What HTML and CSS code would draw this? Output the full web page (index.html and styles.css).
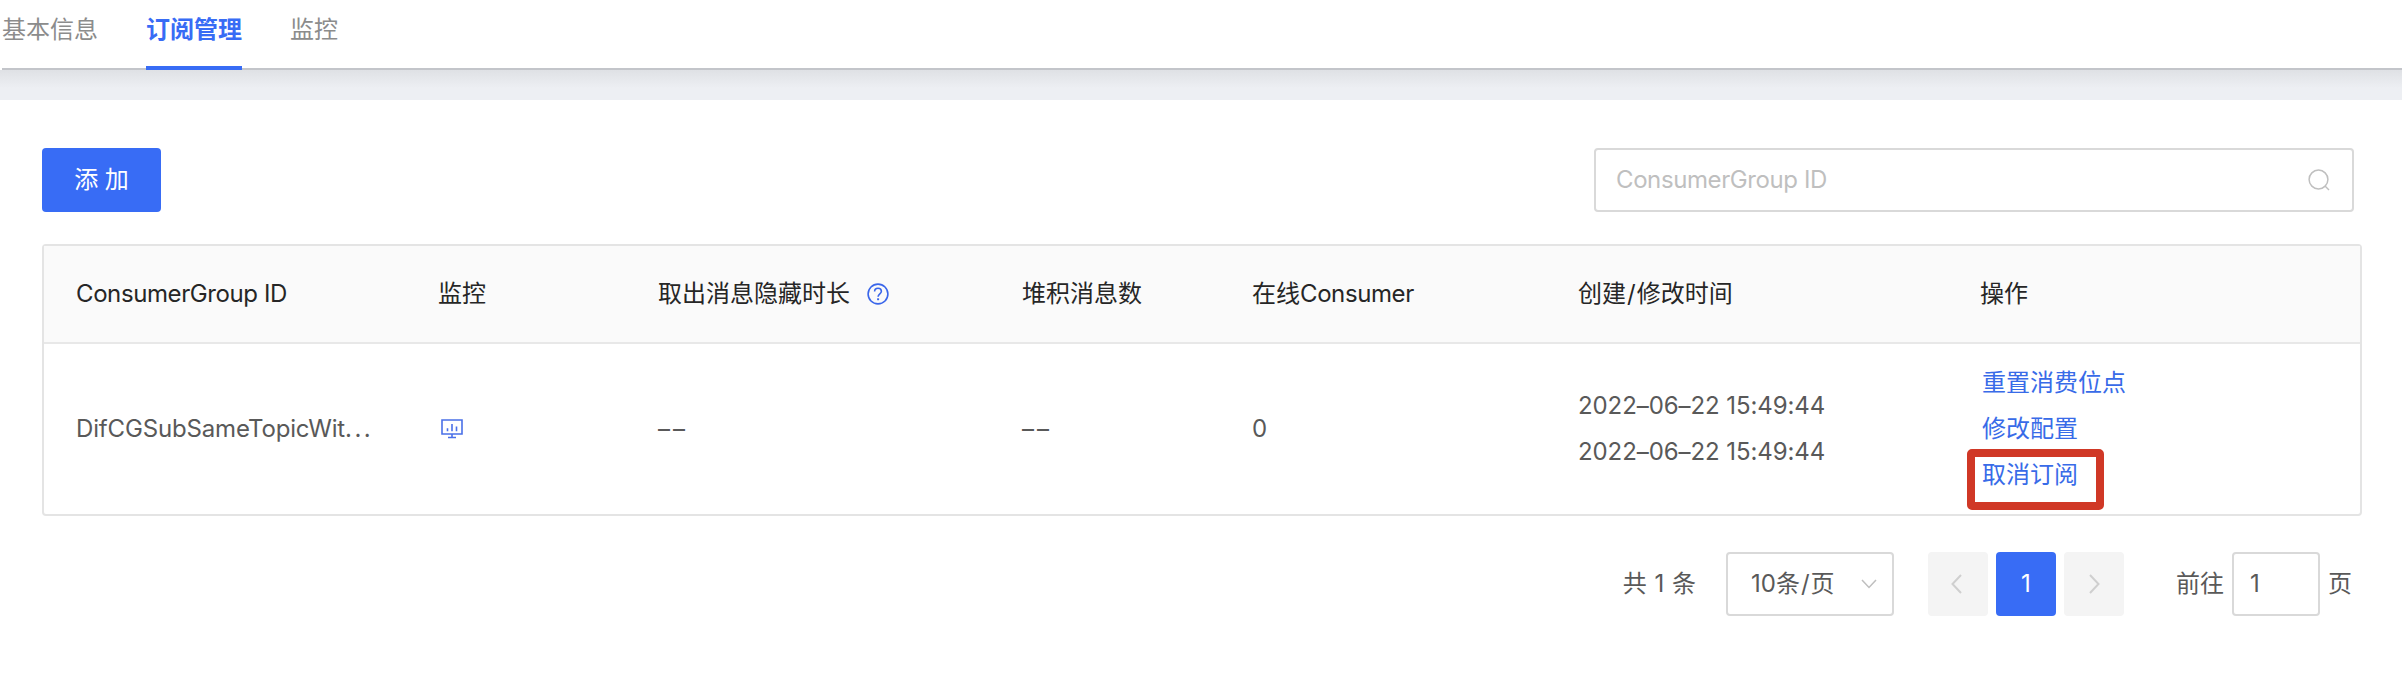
FILE: index.html
```html
<!DOCTYPE html>
<html lang="zh-CN">
<head>
<meta charset="utf-8">
<title>订阅管理</title>
<link rel="stylesheet" href="styles.css">
</head>
<body>
<nav class="tabs">
  <a class="tab">基本信息</a>
  <a class="tab tab-active">订阅管理</a>
  <a class="tab">监控</a>
</nav>
<div class="band"></div>
<main class="content">
  <div class="toolbar">
    <button class="btn-add">添 加</button>
    <div class="search">
      <span class="latin">ConsumerGroup ID</span>
      <svg width="22" height="22" viewBox="0 0 22 22" fill="none" stroke="#bfbfbf" stroke-width="1.5"><circle cx="10.5" cy="10.5" r="9.4"/><path d="M17 17l4 4"/></svg>
    </div>
  </div>
  <section class="table">
    <div class="row head">
      <div class="latin">ConsumerGroup ID</div>
      <div>监控</div>
      <div class="with-icon">取出消息隐藏时长
        <svg width="22" height="22" viewBox="0 0 22 22" fill="none" stroke="#3a66ea" stroke-width="1.6"><circle cx="11" cy="11" r="9.9"/><path d="M7.6 8.6C7.6 6.500 9.100 5.200 11 5.200s3.400 1.200 3.400 3.100c0 2.500-3.300 2.600-3.300 5.400"/><path d="M11.100 15.300v1.900" stroke-width="2"/></svg>
      </div>
      <div>堆积消息数</div>
      <div>在线<span class="latin">Consumer</span></div>
      <div>创建<span class="slash">/</span>修改时间</div>
      <div>操作</div>
    </div>
    <div class="row body">
      <div class="name">DifCGSubSameTopicWit<span class="dots">...</span></div>
      <div class="monitor"><svg width="22" height="20" viewBox="0 0 22 20" fill="none" stroke="#4a70e8" stroke-width="1.6"><path d="M1 1h20v14H1zM6.500 9.200v3M11 5v7.200M15.500 7.500v4.700M11 15v3.500M7 18.500h8"/></svg></div>
      <div class="dash">––</div>
      <div class="dash">––</div>
      <div>0</div>
      <div class="stack dates"><span>2022–06–22 15:49:44</span><span>2022–06–22 15:49:44</span></div>
      <div class="stack links"><a>重置消费位点</a><a>修改配置</a><a class="marked">取消订阅</a></div>
    </div>
  </section>
  <footer class="pager">
    <span class="total">共 1 条</span>
    <div class="select"><span>10条<span class="slash">/</span>页</span>
      <svg width="16" height="10" viewBox="0 0 16 10" fill="none" stroke="#bfbfbf" stroke-width="1.5"><path d="M1 1l7 7.500L15 1"/></svg>
    </div>
    <div class="pages">
      <span class="page"><svg width="11" height="20" viewBox="0 0 11 20" fill="none" stroke="#cfcfcf" stroke-width="2"><path d="M10 1L1.500 10 10 19"/></svg></span>
      <span class="page current">1</span>
      <span class="page"><svg width="11" height="20" viewBox="0 0 11 20" fill="none" stroke="#cfcfcf" stroke-width="2"><path d="M1 1l8.500 9L1 19"/></svg></span>
    </div>
    <span class="goto">前往</span>
    <div class="jump">1</div>
    <span>页</span>
  </footer>
</main>
</body>
</html>
```

FILE: styles.css
```css
*, *::after { box-sizing: border-box; }
body {
  margin: 0;
  background: #fff;
  color: #595959;
  font: 24px/46px Inter, "Noto Sans CJK SC", sans-serif;
  white-space: nowrap;
}
svg { display: block; flex: none; }
.latin { letter-spacing: -0.4px; }
.slash { padding: 0 1px; }
.tabs {
  display: flex;
  gap: 48px;
  height: 70px;
  margin-left: 2px;
  border-bottom: 2px solid #c3c5ca;
  line-height: 60px;
  color: #8c8c8c;
}
.tab { height: 70px; }
.tab-active {
  color: #386cf5;
  font-weight: 700;
  border-bottom: 4px solid #386cf5;
}
.band { height: 30px; background: linear-gradient(#dfe1e5, #edeff3 60%); }
.content { padding: 48px 40px 0 42px; }
.toolbar { display: flex; justify-content: space-between; padding-right: 8px; }
.btn-add {
  width: 119px;
  height: 64px;
  padding: 0;
  border: 0;
  border-radius: 4px;
  background: #386cf5;
  color: #fff;
  font: inherit;
}
.search {
  display: flex;
  align-items: center;
  justify-content: space-between;
  width: 760px;
  height: 64px;
  padding: 0 22px 0 20px;
  border: 2px solid #d9d9d9;
  border-radius: 4px;
  color: #bfbfbf;
}
.table {
  margin-top: 32px;
  border: 2px solid #e4e4e4;
  border-radius: 4px;
}
.row {
  display: grid;
  grid-template-columns: 362px 220px 364px 230px 326px 402px 1fr;
  align-items: center;
}
.row > div { padding-left: 32px; }
.head {
  height: 98px;
  background: #fafafa;
  border-bottom: 2px solid #e8e8e8;
  color: #262626;
}
.head .with-icon { display: flex; align-items: center; gap: 17px; }
.body { height: 170px; }
.name { letter-spacing: -0.15px; }
.dots { letter-spacing: 2.4px; }
.dash { letter-spacing: 3px; }
.dates { letter-spacing: -0.08px; }
.row > .monitor { padding-left: 35px; }
.stack { display: flex; flex-direction: column; align-items: flex-start; }
.row > .links { padding-left: 34px; color: #386be8; }
.marked { position: relative; }
.marked::after {
  content: "";
  position: absolute;
  left: -15px;
  top: -3px;
  width: 137px;
  height: 61px;
  border: 8px solid #d03826;
  border-radius: 5px;
}
.pager {
  display: flex;
  align-items: center;
  justify-content: flex-end;
  height: 64px;
  margin-top: 36px;
  padding-right: 10px;
}
.total { word-spacing: 1px; }
.select {
  display: flex;
  align-items: center;
  justify-content: space-between;
  width: 168px;
  height: 64px;
  margin-left: 30px;
  padding: 0 15px 0 23px;
  border: 2px solid #d9d9d9;
  border-radius: 4px;
}
.pages { display: flex; gap: 8px; margin-left: 34px; }
.page {
  display: flex;
  align-items: center;
  justify-content: center;
  width: 60px;
  height: 64px;
  border-radius: 4px;
  background: #f4f4f4;
}
.page svg { margin-right: 4px; }
.current + .page svg { margin-right: 0; }
.current { background: #386cf5; color: #fff; }
.goto { margin-left: 52px; }
.jump {
  width: 88px;
  height: 64px;
  margin: 0 8px;
  padding-left: 16px;
  border: 2px solid #d9d9d9;
  border-radius: 4px;
  line-height: 60px;
}
```
